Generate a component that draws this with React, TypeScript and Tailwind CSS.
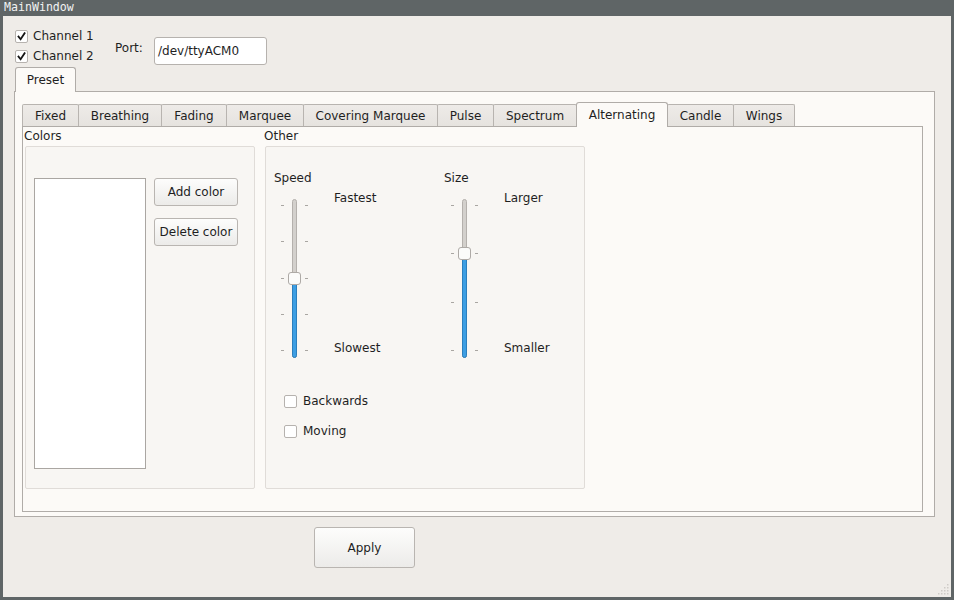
import React from "react";

const FONT = "font-['DejaVu_Sans',sans-serif]";

function Check({ checked }: { checked?: boolean }) {
  return (
    <div className="w-[13px] h-[13px] shrink-0 bg-white border border-[#b6b2ae] rounded-[2px] flex items-center justify-center">
      {checked && (
        <svg width="9" height="9" viewBox="0 0 9 9">
          <path d="M1.5 4.6 L3.6 7.2 L7.6 1.2" fill="none" stroke="#141414" strokeWidth="1.8" strokeLinecap="square" />
        </svg>
      )}
    </div>
  );
}

function Button({ label, className }: { label: string; className: string }) {
  return (
    <div
      className={`${className} flex items-center justify-center rounded-[3px] border border-[#b9b5b1] bg-gradient-to-b from-[#fdfdfc] to-[#ecebe9] text-[#1e1e1e]`}
    >
      {label}
    </div>
  );
}

function Slider({ ticks, handle }: { ticks: number[]; handle: number }) {
  return (
    <svg width="40" height="172" viewBox="0 0 40 172" className="block mt-[1px]">
      {ticks.map((t) => (
        <g key={t}>
          <rect x="7" y={t} width="3" height="1" fill="#a9a6a2" />
          <rect x="31" y={t} width="3" height="1" fill="#a9a6a2" />
        </g>
      ))}
      <rect x="18.5" y="13.5" width="4" height="158" rx="2" fill="#d3d0cc" stroke="#b4b0ac" />
      <rect x="18.5" y={handle} width="4" height={171.5 - handle} rx="2" fill="#3d9ee3" stroke="#2c7fbd" />
      <rect x="14.5" y={handle - 6} width="12" height="12" rx="2.5" fill="#fbfbfa" stroke="#aeaaa6" />
    </svg>
  );
}

const tabs: [string, number][] = [
  ["Fixed", 57],
  ["Breathing", 84],
  ["Fading", 66],
  ["Marquee", 78],
  ["Covering Marquee", 135],
  ["Pulse", 57],
  ["Spectrum", 84],
  ["Alternating", 92],
  ["Candle", 67],
  ["Wings", 62],
];

export default function App() {
  return (
    <div className={`w-[954px] h-[600px] bg-[#5f6566] flex flex-col ${FONT} text-[12px] leading-[14px] text-[#1f1f1f]`}>
      <div className="h-[16px] pl-[4px] font-['DejaVu_Sans_Mono',monospace] text-[11.6px] leading-[15px] text-[#f2f2f2]">
        MainWindow
      </div>
      <div className="relative mx-[3px] mb-[3px] flex-1 bg-[#efece8] flex flex-col pl-[11px] pr-[16px]">
        {/* top row */}
        <div className="h-[51px] flex">
          <div className="w-[101px] pl-[1px] pt-[10px] flex flex-col">
            <div className="h-[20px] flex items-center gap-[5px]">
              <Check checked />
              <span>Channel 1</span>
            </div>
            <div className="h-[20px] flex items-center gap-[5px]">
              <Check checked />
              <span>Channel 2</span>
            </div>
          </div>
          <div className="pt-[25px] w-[39px]">Port:</div>
          <div className="mt-[21px] w-[113px] h-[28px] bg-white border border-[#b6b2ae] rounded-[3px] pl-[3px] flex items-center">
            /dev/ttyACM0
          </div>
        </div>

        {/* Preset tab widget */}
        <div className="flex flex-col">
          <div className="h-[24px] flex items-end pl-[1px]">
            <div className="relative z-10 mb-[-1px] w-[61px] h-[25px] bg-[#fcfaf7] border border-b-0 border-[#b0aca8] rounded-t-[3px] flex items-center justify-center">
              Preset
            </div>
          </div>
          <div className="h-[426px] border border-[#b0aca8] bg-[#fcfaf7] pl-[7px] pr-[11px] pt-[10px]">
            {/* inner tab widget */}
            <div className="h-[24px] flex items-end">
              {tabs.map(([name, w], i) =>
                name === "Alternating" ? (
                  <div
                    key={name}
                    style={{ width: w }}
                    className="relative z-10 ml-[-1px] mb-[-1px] h-[25px] bg-[#fcfaf7] border border-b-0 border-[#b0aca8] rounded-t-[3px] flex items-center justify-center pb-[1px]"
                  >
                    {name}
                  </div>
                ) : (
                  <div
                    key={name}
                    style={{ width: w }}
                    className={`${i === 0 ? "" : "ml-[-1px]"} h-[22px] bg-gradient-to-b from-[#eeebe8] to-[#e6e3df] border border-b-0 border-[#b8b4b0] rounded-t-[2px] flex items-center justify-center pt-[1px]`}
                  >
                    {name}
                  </div>
                )
              )}
            </div>
            <div className="h-[386px] border border-[#b0aca8] bg-[#fcfaf7] flex pl-[1px] pt-[2px] gap-[9px]">
              {/* Colors group */}
              <div className="flex flex-col">
                <div className="h-[14px]">Colors</div>
                <div className="ml-[1px] mt-[3px] w-[230px] h-[343px] border border-[#e0dcd8] rounded-[2px] bg-[#f8f6f3] flex pl-[8px] pt-[31px] gap-[8px]">
                  <div className="w-[112px] h-[291px] bg-white border border-[#aaa6a2]" />
                  <div className="flex flex-col gap-[12px]">
                    <Button label="Add color" className="w-[84px] h-[28px]" />
                    <Button label="Delete color" className="w-[84px] h-[28px]" />
                  </div>
                </div>
              </div>
              {/* Other group */}
              <div className="flex flex-col">
                <div className="h-[14px]">Other</div>
                <div className="ml-[1px] mt-[3px] w-[320px] h-[343px] border border-[#e0dcd8] rounded-[2px] bg-[#f8f6f3] flex flex-col pl-[8px] pt-[24px]">
                  <div className="flex">
                    <div className="w-[170px] flex">
                      <div className="flex flex-col">
                        <div className="h-[14px]">Speed</div>
                        <Slider ticks={[19, 55, 92, 128, 164]} handle={92.5} />
                      </div>
                      <div className="ml-[20px] pt-[20px] h-[184px] flex flex-col justify-between">
                        <span>Fastest</span>
                        <span>Slowest</span>
                      </div>
                    </div>
                    <div className="flex">
                      <div className="flex flex-col">
                        <div className="h-[14px]">Size</div>
                        <Slider ticks={[19, 67, 116, 164]} handle={67.5} />
                      </div>
                      <div className="ml-[20px] pt-[20px] h-[184px] flex flex-col justify-between">
                        <span>Larger</span>
                        <span>Smaller</span>
                      </div>
                    </div>
                  </div>
                  <div className="ml-[10px] mt-[33px] flex flex-col gap-[10px]">
                    <div className="h-[20px] flex items-center gap-[6px]">
                      <Check />
                      <span>Backwards</span>
                    </div>
                    <div className="h-[20px] flex items-center gap-[6px]">
                      <Check />
                      <span>Moving</span>
                    </div>
                  </div>
                </div>
              </div>
            </div>
          </div>
        </div>

        <div className="mt-[10px] ml-[300px]">
          <Button label="Apply" className="w-[101px] h-[41px]" />
        </div>

        <svg className="absolute right-[2px] bottom-[2px]" width="12" height="12" viewBox="0 0 12 12">
          {[
            [10, 1], [7, 4], [10, 4], [4, 7], [7, 7], [10, 7], [1, 10], [4, 10], [7, 10], [10, 10],
          ].map(([x, y]) => (
            <rect key={`${x}-${y}`} x={x} y={y} width="1.5" height="1.5" fill="#cfcbc7" />
          ))}
        </svg>
      </div>
    </div>
  );
}
